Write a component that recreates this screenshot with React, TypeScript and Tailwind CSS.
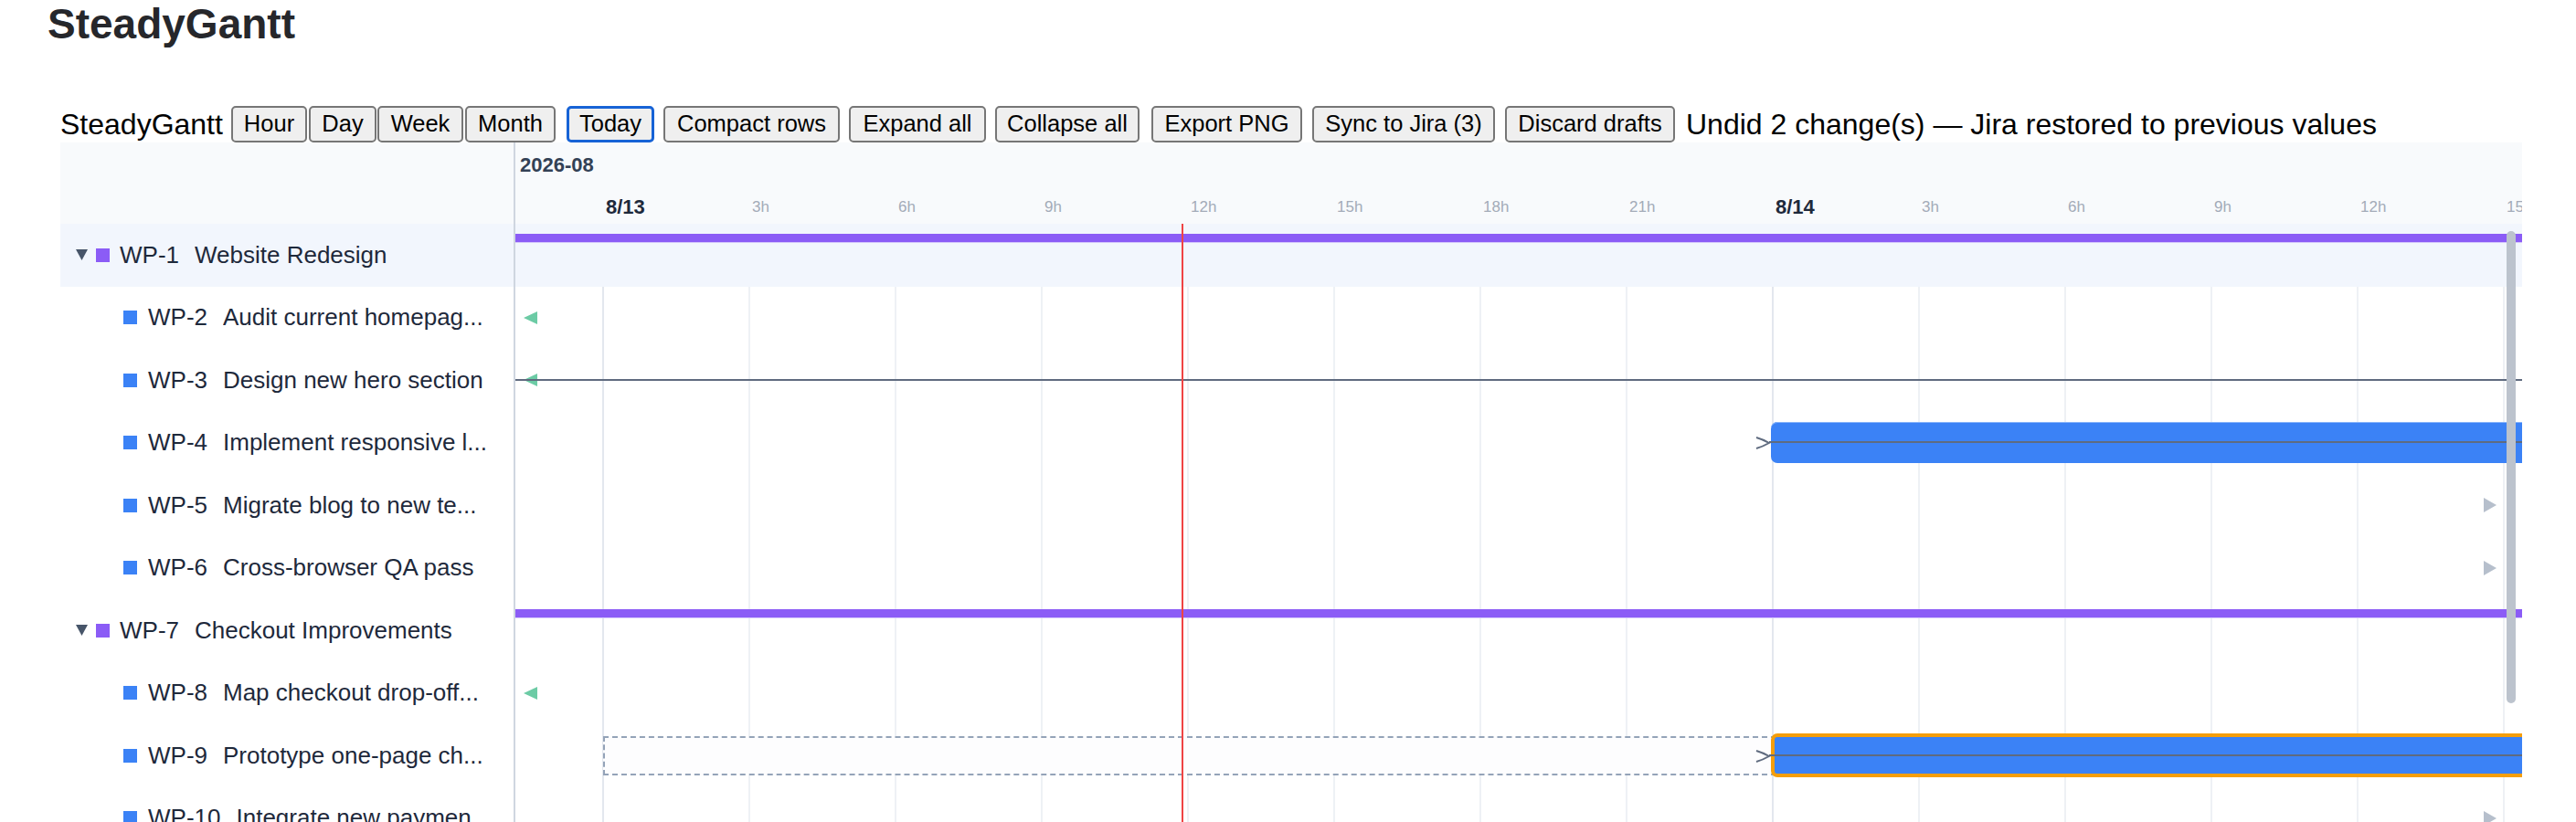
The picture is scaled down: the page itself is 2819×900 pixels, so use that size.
import React from "react";

type Row = { key: string; title: string; parent?: boolean; selected?: boolean };

const ROWS: Row[] = [
  { key: "WP-1", title: "Website Redesign", parent: true, selected: true },
  { key: "WP-2", title: "Audit current homepag..." },
  { key: "WP-3", title: "Design new hero section" },
  { key: "WP-4", title: "Implement responsive l..." },
  { key: "WP-5", title: "Migrate blog to new te..." },
  { key: "WP-6", title: "Cross-browser QA pass" },
  { key: "WP-7", title: "Checkout Improvements", parent: true },
  { key: "WP-8", title: "Map checkout drop-off..." },
  { key: "WP-9", title: "Prototype one-page ch..." },
  { key: "WP-10", title: "Integrate new paymen..." },
];

const GRID0 = 96;
const STEP = 160;
const TICK_LABELS = ["8/13", "3h", "6h", "9h", "12h", "15h", "18h", "21h", "8/14", "3h", "6h", "9h", "12h", "15h"];

function GreenLeft() {
  return (
    <svg className="absolute left-[9px] top-[27px]" width="15" height="14" viewBox="0 0 15 14">
      <polygon points="0,7 15,0 15,14" fill="#6ccba5" />
    </svg>
  );
}

function GrayRight() {
  return (
    <svg className="absolute left-[2154px] top-[26px]" width="14" height="16" viewBox="0 0 14 16">
      <polygon points="0,0 14,8 0,16" fill="#b6bfcc" />
    </svg>
  );
}

function Chevron() {
  return (
    <svg className="absolute left-[1357px] top-[27px] z-[3]" width="17" height="14" viewBox="0 0 17 14">
      <path d="M1,1 Q8,3 15,7 Q8,11 1,13" fill="none" stroke="#5f6b7f" strokeWidth="2" />
    </svg>
  );
}

function TimelineRow({ index }: { index: number }) {
  const row = ROWS[index];
  return (
    <div className={`relative h-[68.5px] ${row.selected ? "bg-[#f2f6fd]" : ""}`}>
      {row.parent && (
        <div className="absolute left-0 right-0 top-[11px] h-[9px] bg-[#8b5cf6] shadow-[0_1px_0_#d4c6fb] z-[2]" />
      )}
      {(index === 1 || index === 7) && <GreenLeft />}
      {index === 2 && (
        <>
          <div className="absolute left-0 right-0 top-[32.5px] h-[2px] bg-[#5f6b7f] z-[2]" />
          <div className="z-[3]">
            <GreenLeft />
          </div>
        </>
      )}
      {index === 3 && (
        <>
          <div className="absolute left-[1374px] right-[-20px] top-[11px] h-[45px] rounded-[7px] bg-[#3b82f6] shadow-[inset_0_1px_0_#86b3fa] z-[2]" />
          <div className="absolute left-[1372px] right-0 top-[32.5px] h-[2px] bg-[#5f6b7f] z-[3]" />
          <Chevron />
        </>
      )}
      {(index === 4 || index === 5 || index === 9) && <GrayRight />}
      {index === 8 && (
        <>
          <div className="absolute left-[96px] w-[1284px] top-[12.5px] h-[43px] border-2 border-dashed border-[#94a3b8] bg-[#fdfdfe] z-[1]" />
          <div className="absolute left-[1374px] right-[-20px] top-[9.5px] h-[48.5px] rounded-[7px] border-4 border-[#f59e0b] bg-[#3b82f6] z-[2]" />
          <div className="absolute left-[1372px] right-0 top-[33px] h-[2px] bg-[#5f6b7f] z-[3]" />
          <div className="absolute left-0 top-[0.5px]">
            <Chevron />
          </div>
        </>
      )}
    </div>
  );
}

function LabelRow({ row }: { row: Row }) {
  return (
    <div
      className={`h-[68.5px] flex items-center whitespace-nowrap text-[26px] text-[#1e293b] ${
        row.selected ? "bg-[#f2f6fd]" : ""
      } ${row.parent ? "pl-[17px]" : "pl-[69px]"}`}
    >
      {row.parent && (
        <svg className="mr-[9px]" width="13" height="12" viewBox="0 0 13 12">
          <polygon points="0,0 13,0 6.5,12" fill="#475569" />
        </svg>
      )}
      <span className={`w-[15px] h-[15px] ${row.parent ? "bg-[#8b5cf6] mr-[11px]" : "bg-[#3b82f6] mr-[12px]"}`} />
      <span>{row.key}</span>
      <span className="ml-[17px] overflow-hidden text-ellipsis">{row.title}</span>
    </div>
  );
}

const btnBase =
  "h-[40px] shrink-0 flex items-center justify-center rounded-[5px] bg-[#efefef] text-[25.5px] leading-none text-black";
const btn = `${btnBase} border-2 border-[#767676]`;

export default function App() {
  return (
    <div className="w-[2819px] min-h-[900px] bg-white overflow-hidden font-['Liberation_Sans',Arial,sans-serif]">
      <h1 className="pl-[52px] h-[52px] text-[46px] leading-[52px] font-bold text-[#26272b]">SteadyGantt</h1>

      <div className="ml-[66px] w-[2694px] mt-[63px]">
        {/* toolbar */}
        <div className="flex items-center h-[41px] whitespace-nowrap text-[32px] leading-none text-black">
          <span className="w-[177px]">SteadyGantt</span>
          <button className={`${btn} ml-[10px] w-[83px]`}>Hour</button>
          <button className={`${btn} ml-[2px] w-[74px]`}>Day</button>
          <button className={`${btn} ml-[1px] w-[94px]`}>Week</button>
          <button className={`${btn} ml-[2px] w-[99px]`}>Month</button>
          <button className={`${btnBase} ml-[12px] w-[96px] border-[3px] border-[#1763d6]`}>Today</button>
          <button className={`${btn} ml-[10px] w-[193px]`}>Compact rows</button>
          <button className={`${btn} ml-[10px] w-[150px]`}>Expand all</button>
          <button className={`${btn} ml-[10px] w-[158px]`}>Collapse all</button>
          <button className={`${btn} ml-[13px] w-[165px]`}>Export PNG</button>
          <button className={`${btn} ml-[11px] w-[200px]`}>Sync to Jira (3)</button>
          <button className={`${btn} ml-[11px] w-[186px]`}>Discard drafts</button>
          <span className="ml-[12px]">Undid 2 change(s) — Jira restored to previous values</span>
        </div>

        {/* gantt */}
        <div className="flex">
          {/* left labels */}
          <div className="w-[496px] shrink-0 flex flex-col">
            <div className="h-[89px] bg-[#f8fafc]" />
            {ROWS.map((r) => (
              <LabelRow key={r.key} row={r} />
            ))}
          </div>

          <div className="w-[2px] shrink-0 bg-[#cfd6e0]" />

          {/* timeline */}
          <div className="relative flex-1 overflow-hidden">
            <div className="relative h-[89px] bg-[#f8fafc]">
              <span className="absolute left-[5px] top-[12px] h-[26px] leading-[26px] text-[22px] font-semibold text-[#334155]">
                2026-08
              </span>
              {TICK_LABELS.map((t, i) => {
                const day = t.includes("/");
                return (
                  <span
                    key={i}
                    className={`absolute top-[59px] h-[24px] leading-[24px] whitespace-nowrap ${
                      day ? "text-[22px] font-bold text-[#1e293b]" : "text-[17px] text-[#a3abb8]"
                    }`}
                    style={{ left: GRID0 + i * STEP + 3 }}
                  >
                    {t}
                  </span>
                );
              })}
            </div>

            <div className="relative">
              {/* grid lines */}
              {TICK_LABELS.map((t, i) => (
                <div
                  key={i}
                  className={`absolute top-0 bottom-0 w-[2px] ${t.includes("/") ? "bg-[#e3e7ee]" : "bg-[#eef1f5]"}`}
                  style={{ left: GRID0 + i * STEP - 1 }}
                />
              ))}
              <div className="relative">
                {ROWS.map((r, i) => (
                  <TimelineRow key={r.key} index={i} />
                ))}
              </div>
              {/* today line */}
              <div className="absolute top-0 bottom-0 left-[729px] w-[2px] bg-[#ef4444] z-[5]" />
              {/* scrollbar thumb */}
              <div className="absolute left-[2179px] top-[8px] w-[10px] h-[517px] rounded-full bg-[#bcc3cd] z-[6]" />
            </div>
          </div>
        </div>
      </div>
    </div>
  );
}
